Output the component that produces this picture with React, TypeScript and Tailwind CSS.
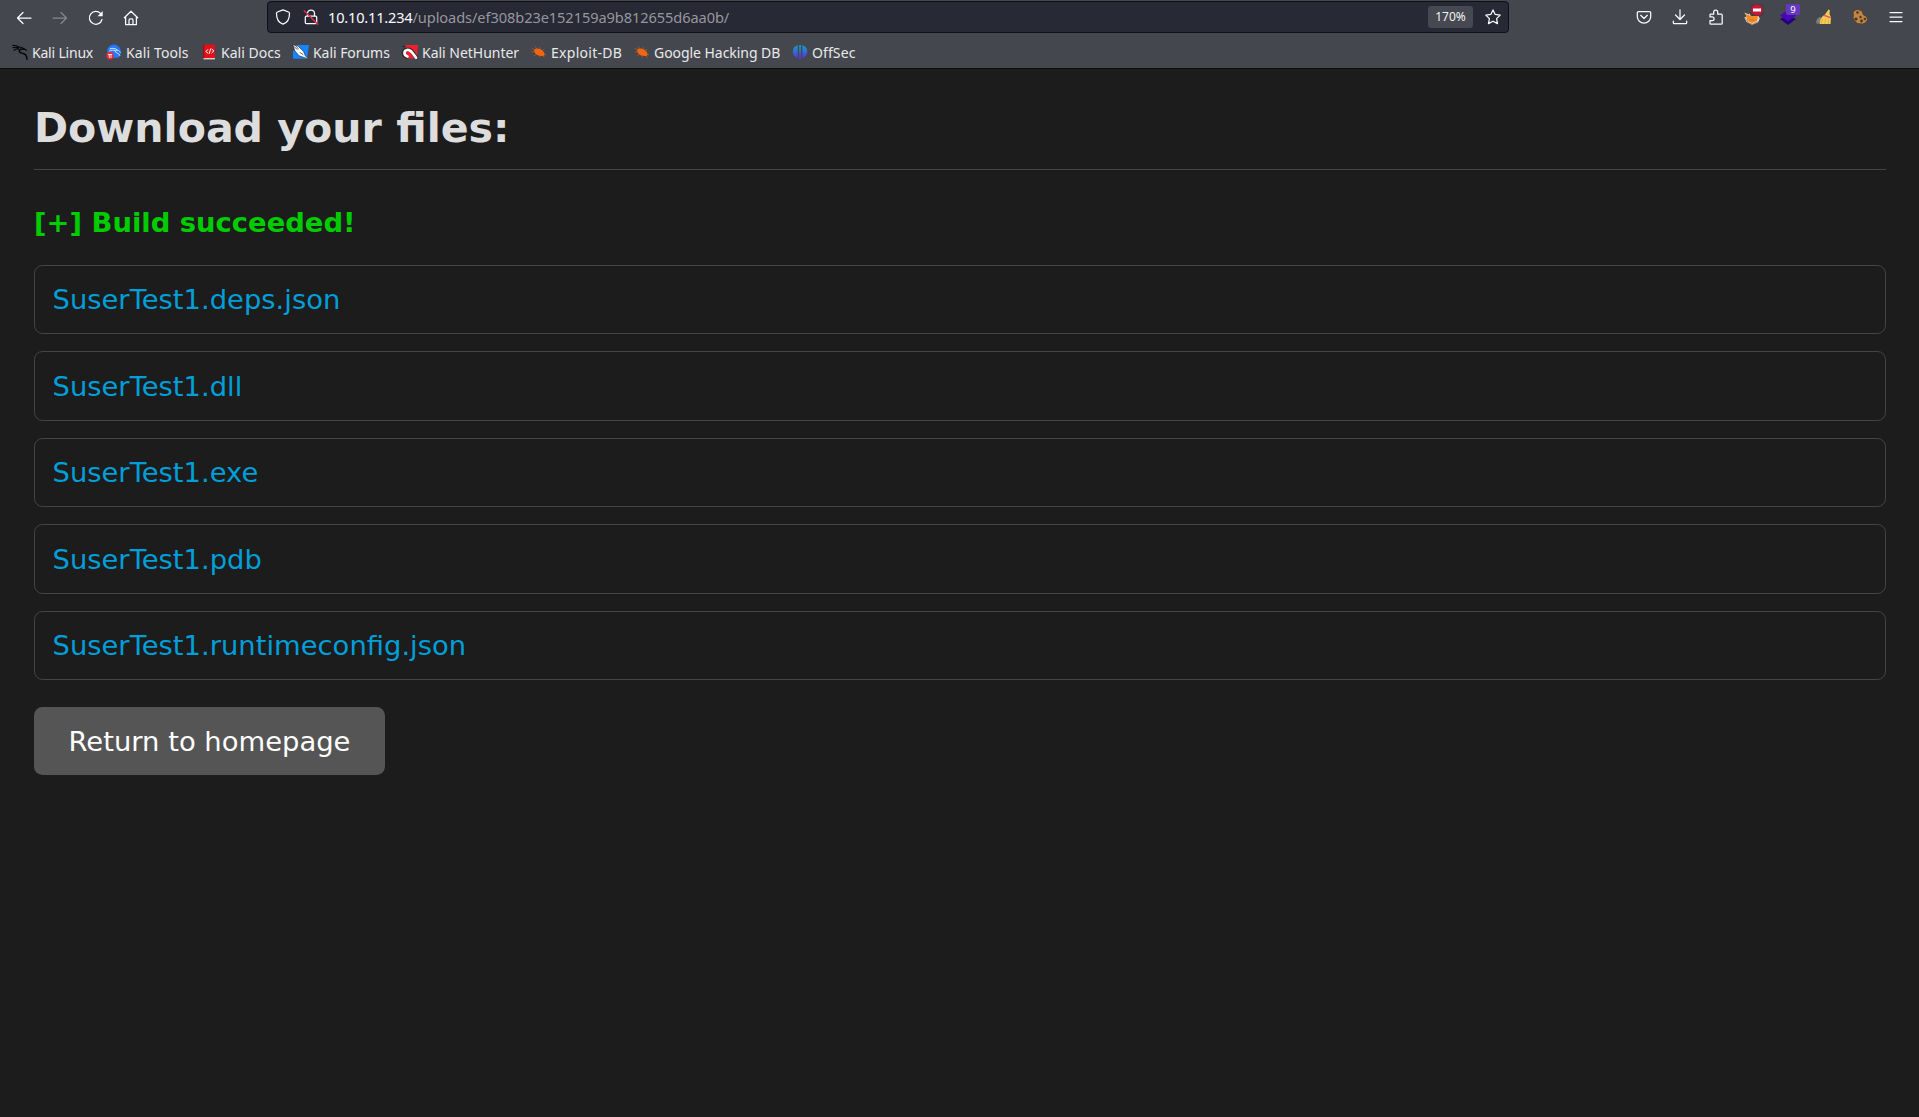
import React from "react";

type IconProps = { children: React.ReactNode; className?: string };

function Icon({ children, className = "" }: IconProps) {
  return (
    <svg
      viewBox="0 0 16 16"
      className={`h-4 w-4 shrink-0 overflow-visible ${className}`}
      fill="none"
      stroke="currentColor"
      strokeWidth="1.25"
      strokeLinecap="round"
      strokeLinejoin="round"
    >
      {children}
    </svg>
  );
}

const KaliIcon = () => (
  <Icon className="text-[#050505]">
    <path d="M.5 1.200C3 1.200 5.500 1.700 7 3M1 3.800c2-.8 4-.6 5.500.4M2 6.300c1.300-1.300 3-1.700 4.800-1.300M6.500 3c2.500 0 4.500.8 5.700 2l2.300 1.300" strokeWidth="1.100" />
    <path d="M12 5C9.500 4.600 7.300 5.200 7.300 7c0 1.900 2 2.100 3.800 2.500 2.400.5 3.700 2 3.900 5.700" strokeWidth="1.500" />
  </Icon>
);

const ToolsIcon = () => (
  <Icon>
    <path d="M1.200 9A6.900 6.900 0 0 1 14.700 6c.6 3.500-.2 6.200-2.500 7.800H7z" fill="#2777ff" stroke="none" />
    <path d="M4 4.800c3-1 5.500-.5 7 1M3.500 7c2-1 4-.9 6-.6 2.500-.8 4 .6 4.800 2M9 7c0 2.500 4 1.500 5 4.500" stroke="#dcecff" strokeWidth=".9" />
    <circle cx="4" cy="11.800" r="3.700" fill="#ed2736" stroke="none" />
    <path d="M2.300 10.500h3.400M3.300 10.500v3M5 10.500v3" stroke="#fff" strokeWidth=".8" />
  </Icon>
);

const DocsIcon = () => (
  <Icon>
    <path d="M2 .5h12V15H2z" fill="#df1119" stroke="none" />
    <path d="M2 .5h1.200V15H2z" fill="#a70910" stroke="none" />
    <path d="M2.500 14H14v1.400H2.500z" fill="#d8d0d0" stroke="none" />
    <path d="m6.800 5.500-2 2 2 1.500M10.800 5l2 2-2 1.800M9.600 5l-1.400 4.500" stroke="#fff" strokeWidth="1" />
  </Icon>
);

const ForumsIcon = () => (
  <Icon>
    <path d="M3 .9h13l-2 13.800H0V8z" fill="#1684fc" stroke="none" />
    <path d="m0 .8 5 1.200 5.500 5.500 1.800 4.300 3.300 3.500-5-2-4.500-1.500L2 7z" fill="#fff" stroke="#24272d" strokeWidth=".6" />
    <path d="m1 2.500 3.300 3M2.500 1.500l3 3.500M7 8.500l3 2" stroke="#24272d" strokeWidth=".7" />
  </Icon>
);

const NetHunterIcon = () => (
  <Icon>
    <path d="M3.500 1H16l-1.200 13.500H1.500z" fill="#ed202e" stroke="none" />
    <path d="M4.500 13C.5 11.500 1 6 5 5.500c4-.6 5.600 2.600 9 8" stroke="#272a30" strokeWidth="3.800" />
    <path d="M5.500 12.500C1.500 11.500 1.500 6.500 5.300 6c3.500-.4 5.200 3 8.700 7.700" stroke="#fff" strokeWidth="2.700" />
    <path d="M.5 2 3.500 3" stroke="#272a30" />
  </Icon>
);

const BugIcon = () => (
  <Icon className="text-[#f3650f]">
    <path d="M3.500 5.500C5.500 3.500 9.500 4.500 12 7c1.500 1.500 2 3.500 1 4.800-3 .7-6.800.1-8.600-2.200C3.300 8.300 3 6.500 3.500 5.500z" fill="currentColor" stroke="none" />
    <path d="M1 4.500 5 6M1 8l4-.5M4.500 2.800l1.500 3M9 3.500l.5 3M13 5.200l-2 2M3.500 11.500l3-2M8.500 13l.5-2.500M12 10l2.800.8M11.500 11.500l2 2" strokeWidth=".5" />
  </Icon>
);

const OffSecIcon = () => (
  <Icon>
    <defs>
      <linearGradient id="offsec" gradientUnits="userSpaceOnUse" x1="0" x2="0" y1="1" y2="15">
        <stop offset="0" stopColor="#11a5c6" />
        <stop offset="1" stopColor="#5b2cdd" />
      </linearGradient>
    </defs>
    <path d="M5.700 1.200v13C2.500 13 .8 10.800.8 7.800.8 4.500 2.500 2 5.700 1.200zM7.200 1h1.700v14.500H7.200zM10.400 1.200v13c3.200-1.200 4.900-3.400 4.900-6.400 0-3.300-1.700-5.800-4.900-6.600z" fill="url(#offsec)" stroke="none" />
  </Icon>
);

const bookmarks = [
  { label: "Kali Linux", width: "w-[94px]", text: "tracking-[-0.2px]", icon: <KaliIcon /> },
  { label: "Kali Tools", width: "w-[95px]", text: "tracking-[0.12px]", icon: <ToolsIcon /> },
  { label: "Kali Docs", width: "w-[92px]", text: "tracking-[0.03px]", icon: <DocsIcon /> },
  { label: "Kali Forums", width: "w-[109px]", text: "tracking-[-0.05px]", icon: <ForumsIcon /> },
  { label: "Kali NetHunter", width: "w-[129px]", text: "tracking-[-0.02px]", icon: <NetHunterIcon /> },
  { label: "Exploit-DB", width: "w-[103px]", text: "tracking-[0.28px]", icon: <BugIcon /> },
  { label: "Google Hacking DB", width: "w-[158px]", text: "tracking-[-0.05px]", icon: <BugIcon /> },
  { label: "OffSec", width: "w-[80px]", text: "tracking-[0.1px]", icon: <OffSecIcon /> },
];

const files = [
  { name: "SuserTest1.deps.json", height: "h-[69px]" },
  { name: "SuserTest1.dll", height: "h-[70px]" },
  { name: "SuserTest1.exe", height: "h-[69px]" },
  { name: "SuserTest1.pdb", height: "h-[70px]" },
  { name: "SuserTest1.runtimeconfig.json", height: "h-[69px]" },
];

function NavigationBar() {
  return (
    <div className="flex h-[34px] items-center">
      <div className="flex w-[267px] shrink-0 items-center gap-5 pl-4 pt-px">
        <Icon><path d="M15 8H1.500M7 2.500 1.500 8 7 13.500" /></Icon>
        <Icon className="text-[#85878b]"><path d="M1 8h13.500M9 2.500 14.500 8 9 13.500" /></Icon>
        <Icon>
          <path d="M14 9.500A6.400 6.400 0 1 1 12.700 3.700" />
          <path d="M14.700 1v5.200H9.500z" fill="currentColor" stroke="none" />
        </Icon>
        <Icon className="-ml-px">
          <path d="M1.300 7.800 8 1.200l6.700 6.600M2.600 7v7.500h10.800V7M6 14.300V10.200c0-.8.500-1.300 1.200-1.300h1.600c.7 0 1.200.5 1.200 1.300v4.100" />
        </Icon>
      </div>
      <div className="-mt-px flex h-8 w-[1242px] shrink-0 items-center rounded border border-[#0d1014] bg-[#272935] pl-[7px]">
        <Icon><path d="M8 .8 13.600 3c.6.200.9.600.9 1.200.1 5.200-1.800 9.300-6.500 11C3.300 13.500 1.400 9.400 1.500 4.200c0-.6.300-1 .9-1.200z" /></Icon>
        <Icon className="ml-3">
          <path d="M4.500 7V4.500a3.500 3.500 0 0 1 7 0V7M3.500 7h9c.8 0 1.200.5 1.200 1.200v5.300c0 .8-.4 1.200-1.200 1.200h-9c-.8 0-1.200-.4-1.200-1.200V8.200c0-.7.400-1.200 1.200-1.200z" />
          <path d="m1.200 1.800 13.500 13.500" stroke="#e22850" strokeWidth="1.500" />
        </Icon>
        <div className="ml-[9px] mt-[3px] grow whitespace-nowrap text-[14.6px] tracking-[-0.08px] text-[#96979d]">
          <span className="tracking-[-0.2px] text-[#fbfbfe]">10.10.11.234</span>/uploads/ef308b23e152159a9b812655d6aa0b/
        </div>
        <span className="mt-px flex h-[22px] w-[45px] items-center justify-center rounded-[3px] bg-[#464852] text-[12px] text-[#f3f3f5]">170%</span>
        <Icon className="ml-3 mr-[7px]"><path d="m8 .9 2.200 4.500 5 .7-3.600 3.500.9 5L8 12.200l-4.500 2.400.9-5L.8 6.100l5-.7z" /></Icon>
      </div>
      <div className="ml-auto flex items-center gap-5 pr-[15px]">
        <Icon>
          <path d="M2.500 2.500h11c.7 0 1.200.5 1.200 1.200V7.500a6.700 6.700 0 0 1-13.400 0V3.700c0-.7.500-1.200 1.200-1.200z" />
          <path d="M4.700 6.300 8 9.500l3.300-3.200" />
        </Icon>
        <Icon><path d="M8 .8v9.500M3.500 6 8 10.500 12.500 6M1.300 12v1.700c0 .6.300 1 1 1h11.400c.7 0 1-.4 1-1V12" /></Icon>
        <Icon>
          <path d="M2.500 5.200h3.200V3.200a2 2 0 0 1 4 0v2h3.500c.6 0 1 .4 1 1v8c0 .6-.4 1-1 1H3c-.6 0-1-.4-1-1v-2.500h2.200a1.900 1.900 0 0 0 0-3.800H2V5.700z" />
        </Icon>
        <div className="relative flex">
          <Icon>
            <path d="M.3 3.500 5 5.500 7 3l6 1.500 2.800 5-1.800 4L8 15.800 2.500 13 .3 8.500 3 7.500z" fill="#e8d9c8" stroke="none" />
            <path d="m1.500 5 4 1.500 5-1 3.500 2-1 4.500-5 2-4.500-2z" fill="#f68a22" stroke="none" />
            <path d="m1.500 9.500 2.500 4 4.500 1.700 5-2.200M6 11h4" stroke="#a8703c" strokeWidth=".7" />
          </Icon>
          <svg viewBox="0 0 14 12" className="absolute -top-[5px] left-[6px] h-3 w-3.5">
            <rect width="14" height="12" rx="2" fill="#4b3c43" />
            <ellipse cx="7" cy="6" rx="5.600" ry="5.600" fill="#c91631" />
            <path d="M3 4.500h8v3H3z" fill="#fff" />
          </svg>
        </div>
        <div className="relative flex">
          <Icon>
            <path d="m0 10 8-4 8 4-8 6z" fill="#210077" stroke="none" />
            <path d="m0 6.500 8-5.500 8 5.500-8 6z" fill="#4a08b4" stroke="none" />
          </Icon>
          <span className="absolute -top-[5px] left-[6px] flex h-[11px] w-3.5 items-center justify-center rounded-[2px] bg-[#6538bd] text-[9.500px] leading-none text-white">9</span>
        </div>
        <Icon>
          <path d="M.5 14.500C-.5 11 2 8 5 8l3 6-3 1z" fill="#7a8176" stroke="none" />
          <path d="m12.500.5 1.300.5-.3 4 1.500 3.500-.5 6.500H4C3.500 11.500 5 8 9 5.500z" fill="#f5cb58" stroke="none" />
          <path d="m8.500 6.500 5.500 2" stroke="#e65e4c" strokeWidth="1.500" />
          <path d="m6.500 10-1.200 4.200M9.500 10.500l-.5 4M12.500 11v3.500" stroke="#d59c36" strokeWidth=".7" />
        </Icon>
        <Icon>
          <path d="M3 1.200 6 .5 10 2l1.500 4 3 1.500 1 3-1.500 3-3.500 1.500-5-.5-3.200-3L1 8.500 1.500 6 1 4z" fill="#bf8545" stroke="#593d29" strokeWidth=".8" />
          <circle cx="5.500" cy="3.500" r="1.300" fill="#4a3528" stroke="none" />
          <circle cx="4" cy="10" r="1.600" fill="#4a3528" stroke="none" />
          <circle cx="8.500" cy="8" r="1.200" fill="#4a3528" stroke="none" />
          <circle cx="9.500" cy="12" r="1.400" fill="#4a3528" stroke="none" />
          <circle cx="12.800" cy="10" r="1.200" fill="#4a3528" stroke="none" />
        </Icon>
        <Icon><path d="M2 3.500h12M2 8h12M2 12.500h12" /></Icon>
      </div>
    </div>
  );
}

export default function App() {
  return (
    <div className="min-h-screen bg-[#1c1c1c]">
      <header className="h-[69px] border-b border-[#0c0c0d] bg-[#44474e] font-['Noto_Sans',sans-serif] text-[#fbfbfe]">
        <NavigationBar />
        <nav className="flex h-[34px] items-center pl-3 pt-0.5">
          {bookmarks.map((b) => (
            <a key={b.label} className={`flex shrink-0 items-center gap-1 whitespace-nowrap text-[14px] text-[#e9e9ea] ${b.width}`}>
              {b.icon}
              <span className={b.text}>{b.label}</span>
            </a>
          ))}
        </nav>
      </header>
      <main className="pl-[34px] pr-[33px] font-['DejaVu_Sans',sans-serif] text-[27.4px]">
        <h1 className="flex h-[101px] items-center border-b border-[#444] pt-[19px] text-[41.1px] font-bold text-[#ddd]">Download your files:</h1>
        <p className="flex h-[95px] items-center pt-2.5 font-bold text-[#0c0]">[+] Build succeeded!</p>
        <ul className="flex flex-col gap-[17px]">
          {files.map((f) => (
            <li key={f.name} className={`flex items-center rounded-[8.5px] border border-[#444] pl-[17.5px] pt-px text-[#009fd9] ${f.height}`}>
              <a>{f.name}</a>
            </li>
          ))}
        </ul>
        <button className="mt-[27px] flex h-[68px] w-[351px] items-center justify-center rounded-[8.5px] bg-[#555] pt-0.5 text-white">Return to homepage</button>
      </main>
    </div>
  );
}
